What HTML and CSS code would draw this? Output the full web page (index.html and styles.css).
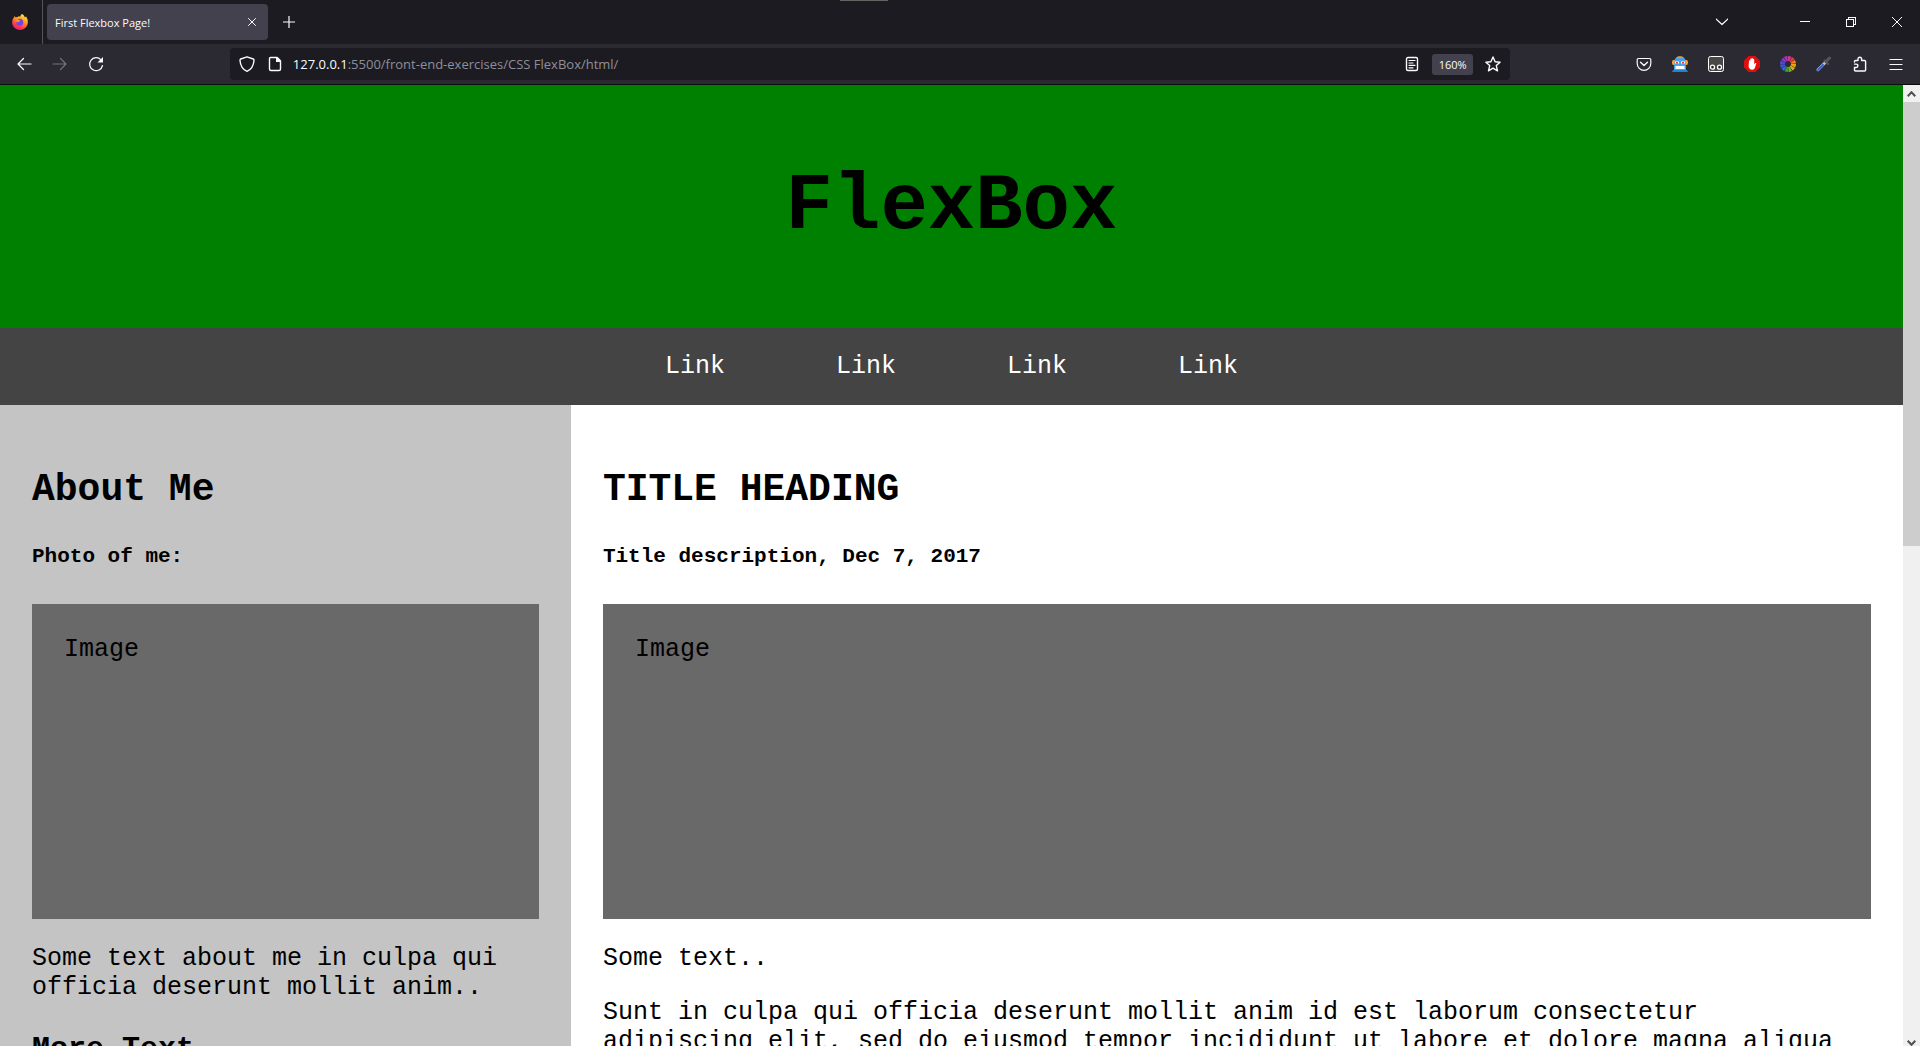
FILE: index.html
```html
<!DOCTYPE html>
<html lang="en">
<head>
<meta charset="utf-8">
<title>First Flexbox Page!</title>
<link rel="stylesheet" href="styles.css">
</head>
<body>
<div class="window-grip"></div>
<header class="tabbar">
  <div class="brand">
    <svg width="16" height="16" viewBox="0 0 16 16"><defs><linearGradient id="fx" x1="0.8" y1="0" x2="0.3" y2="1"><stop offset="0" stop-color="#fff04a"/><stop offset=".4" stop-color="#ff9a1f"/><stop offset=".75" stop-color="#ff3b47"/><stop offset="1" stop-color="#e31587"/></linearGradient></defs><path fill="url(#fx)" d="M10 0c2 1 2.6 2.4 2.7 3.4L14 2.6C15.500 4.500 16 6.500 15.800 9c-.5 4-3.800 7-7.800 7S.5 13 .2 9C0 6.800.8 4.500 2.200 3L2.500 2l1 1.200 2-.2 1.200-.8c.6-.1 1.300.1 1.600.6C8.300 1.800 9 .6 10 0z"/><circle cx="7.800" cy="8.300" r="3.500" fill="#7542e5"/><path d="M3.500 5.500c2-.8 4 .3 5 1.500-1.500 0-2 1.300-3.500 1.500z" fill="#ff9820"/></svg>
  </div>
  <div class="tab">
    <span>First Flexbox Page!</span>
    <button class="tab-close" aria-label="Close tab"><svg width="8" height="8" viewBox="0 0 8 8"><path class="line thin" d="M.5.5l7 7M7.500.5l-7 7"/></svg></button>
  </div>
  <button class="tool new-tab" aria-label="New tab"><svg width="12" height="12" viewBox="0 0 12 12"><path class="line" d="M6 0v12M0 6h12"/></svg></button>
  <button class="tool all-tabs" aria-label="List all tabs"><svg width="12" height="8" viewBox="0 0 12 8"><path class="line" d="M0 1l6 5.500L12 1"/></svg></button>
  <div class="window-buttons">
    <button class="win" aria-label="Minimize"><svg width="10" height="10" viewBox="0 0 10 10"><path class="crisp" d="M0 4.500h10"/></svg></button>
    <button class="win" aria-label="Restore"><svg width="10" height="10" viewBox="0 0 10 10"><path class="crisp" d="M.5 2.500h7v7h-7zM2.500 2.500v-2h7v7h-2"/></svg></button>
    <button class="win" aria-label="Close"><svg width="10" height="10" viewBox="0 0 10 10"><path class="line thin" d="M0 0l10 10M10 0L0 10"/></svg></button>
  </div>
</header>
<div class="toolbar">
  <button class="tool" aria-label="Back"><svg width="16" height="16" viewBox="0 0 16 16"><path class="line" d="M15 8H2M7.500 2.500L2 8l5.500 5.500"/></svg></button>
  <button class="tool dim" aria-label="Forward"><svg width="16" height="16" viewBox="0 0 16 16"><path class="line" d="M1 8h13M8.500 2.500L14 8l-5.500 5.500"/></svg></button>
  <button class="tool" aria-label="Reload"><svg width="16" height="16" viewBox="0 0 16 16"><path class="line" d="M14.500 9.500A6.500 6.500 0 1 1 13 3.800"/><path fill="currentColor" d="M15 1v5.500H9.500z"/></svg></button>
  <span class="spring"></span>
  <div class="urlbar">
    <button class="mini" aria-label="Tracking protection"><svg width="16" height="16" viewBox="0 0 16 16"><path class="line thick" d="M8 .8l6.300 2.200c.7.300.8.700.7 1.500C14.600 9.500 12.500 13.500 8 15.300 3.500 13.500 1.400 9.500 1 4.500c0-.8 0-1.200.7-1.500z"/></svg></button>
    <button class="mini" aria-label="Site information"><svg width="16" height="16" viewBox="0 0 16 16"><path class="line thick" d="M3.500 1.500H10L13.500 5v8c0 1-.5 1.500-1.500 1.500H4c-1 0-1.500-.5-1.500-1.500V2.500c0-.6.400-1 1-1z"/><path fill="currentColor" d="M9 1h1.500L14 4.500V6H9z"/></svg></button>
    <label class="host" for="url">127.0.0.1</label>
    <input class="url" id="url" type="text" value=":5500/front-end-exercises/CSS FlexBox/html/">
    <button class="mini" aria-label="Reader view"><svg width="16" height="16" viewBox="0 0 16 16"><rect class="line thick" x="2.500" y="1.500" width="11" height="13" rx="1.500"/><path class="line" d="M5 4.500h6M5 7h4M5 9.300h6M5 11.800h4"/></svg></button>
    <button class="zoom">160%</button>
    <button class="mini" aria-label="Bookmark"><svg width="16" height="16" viewBox="0 0 16 16"><path class="line thick" d="M8 1l2.100 4.700 5 .5-3.800 3.400 1.200 5.200L8 12.200l-4.500 2.600 1.200-5.200L.9 6.200l5-.5z"/></svg></button>
  </div>
  <span class="spring"></span>
  <button class="tool" aria-label="Pocket"><svg width="16" height="16" viewBox="0 0 16 16"><path class="line" d="M2.500 2.500h11c.8 0 1.300.5 1.300 1.300V7.500a6.800 6.800 0 0 1-13.600 0V3.800c0-.8.500-1.300 1.300-1.300z"/><path class="line thick" d="M4.500 6.200L8 9.500l3.500-3.300"/></svg></button>
  <button class="tool" aria-label="Robot extension"><svg width="16" height="16" viewBox="0 0 16 16"><path fill="#f6a336" d="M4 2c1-2.500 7-2.500 8 0zM1 4h14c1.300 1 1.300 4 0 5H1C-.3 8-.3 5 1 4z"/><path fill="#4aa3e8" d="M3 2.500c3-1.500 7-1.500 10 0l1 8V14H2v-3.500z"/><path fill="#2481c5" d="M1 14h14l1 2H0z"/><path fill="#fff" d="M3 5.500h4v2H3zM9 5.500h4v2H9zM3.500 10h9v3h-9z"/><path fill="#e33" d="M4 6h2v1.500H4zM10 6h2v1.500h-2z"/></svg></button>
  <button class="tool" aria-label="Tampermonkey"><svg width="16" height="16" viewBox="0 0 16 16"><rect x=".5" y=".5" width="15" height="15" rx="2" fill="#484848" stroke="#fff"/><circle cx="4.500" cy="11.200" r="2" fill="#222" stroke="#fff" stroke-width="1.300"/><circle cx="11.500" cy="11.200" r="2" fill="#222" stroke="#fff" stroke-width="1.300"/></svg></button>
  <button class="tool" aria-label="Ad blocker"><svg width="16" height="16" viewBox="0 0 16 16"><path fill="#e40d0d" d="M4.700 0h6.600L16 4.700v6.600L11.300 16H4.700L0 11.300V4.700z"/><path fill="#fff" d="M5 5c0-1 1.200-1 1.300 0V3.300c0-1 1.300-1 1.300 0V2.600c0-.9 1.300-.9 1.300 0v.9c.1-.9 1.300-.9 1.300.1v5l.8-1.300c.5-.6 1.400-.2 1.200.5L10.800 12c-.5 1.200-1.300 1.700-2.500 1.700C6 13.700 4.600 12 4.600 10z"/></svg></button>
  <button class="tool" aria-label="Colour wheel"><svg width="16" height="16" viewBox="0 0 16 16" fill="none" stroke-width="5"><g stroke-dasharray="2.500 50"><circle cx="8" cy="8" r="5.500" stroke="#f2a20c"/><circle cx="8" cy="8" r="5.500" stroke="#d9b310" transform="rotate(30 8 8)"/><circle cx="8" cy="8" r="5.500" stroke="#6fb51f" transform="rotate(60 8 8)"/><circle cx="8" cy="8" r="5.500" stroke="#2fa33b" transform="rotate(90 8 8)"/><circle cx="8" cy="8" r="5.500" stroke="#3468d8" transform="rotate(120 8 8)"/><circle cx="8" cy="8" r="5.500" stroke="#3d52df" transform="rotate(150 8 8)"/><circle cx="8" cy="8" r="5.500" stroke="#5d42d4" transform="rotate(180 8 8)"/><circle cx="8" cy="8" r="5.500" stroke="#7e3bd0" transform="rotate(210 8 8)"/><circle cx="8" cy="8" r="5.500" stroke="#a633bd" transform="rotate(240 8 8)"/><circle cx="8" cy="8" r="5.500" stroke="#d1358c" transform="rotate(270 8 8)"/><circle cx="8" cy="8" r="5.500" stroke="#e33b42" transform="rotate(300 8 8)"/><circle cx="8" cy="8" r="5.500" stroke="#f0811f" transform="rotate(330 8 8)"/></g></svg></button>
  <button class="tool" aria-label="Colour picker"><svg width="16" height="16" viewBox="0 0 16 16" stroke-linecap="round"><path stroke="#aab8d8" stroke-width="3" d="M2 13.700l6.500-6.500"/><path stroke="#3159d0" stroke-width="1.800" d="M2 13.800l5-5"/><path stroke="#565656" stroke-width="3" d="M10.500 5l3-3"/><path stroke="#565656" stroke-width="2" d="M8.500 4.500l3.500 3.500"/></svg></button>
  <button class="tool" aria-label="Extensions"><svg width="16" height="16" viewBox="0 0 16 16"><path class="line thick" d="M2.500 6V5.500c0-.6.400-1 1-1H6V3a1.800 1.800 0 0 1 3.600 0v1.500h3c.6 0 1 .4 1 1v8.500c0 .6-.4 1-1 1H3.500c-.6 0-1-.4-1-1v-2.500h1.700a1.700 1.700 0 0 0 0-3.400H2.500"/></svg></button>
  <button class="tool" aria-label="Menu"><svg width="16" height="16" viewBox="0 0 16 16"><path class="line" d="M2 3.500h12M2 8.500h12M2 13.500h12"/></svg></button>
</div>
<div class="viewport">
  <div class="page">
    <div class="hero"><h1>FlexBox</h1></div>
    <nav class="links">
      <a href="#">Link</a><a href="#">Link</a><a href="#">Link</a><a href="#">Link</a>
    </nav>
    <div class="columns">
      <aside class="side">
        <h2>About Me</h2>
        <h5>Photo of me:</h5>
        <div class="image">Image</div>
        <p>Some text about me in culpa qui officia deserunt mollit anim..</p>
        <h3>More Text</h3>
      </aside>
      <main class="main">
        <h2>TITLE HEADING</h2>
        <h5>Title description, Dec 7, 2017</h5>
        <div class="image">Image</div>
        <p>Some text..</p>
        <p>Sunt in culpa qui officia deserunt mollit anim id est laborum consectetur adipiscing elit, sed do eiusmod tempor incididunt ut labore et dolore magna aliqua</p>
      </main>
    </div>
  </div>
  <div class="scrollbar">
    <div class="arrow"><svg width="9" height="6" viewBox="0 0 9 6"><path d="M.7 5.200l3.800-4 3.800 4"/></svg></div>
    <div class="track"><div class="thumb"></div></div>
    <div class="arrow"><svg width="9" height="6" viewBox="0 0 9 6"><path d="M.7.8l3.800 4 3.800-4"/></svg></div>
  </div>
</div>
</body>
</html>
```
FILE: styles.css
```css
* { box-sizing: border-box; }

body {
  margin: 0;
  height: 100vh;
  display: flex;
  flex-direction: column;
  overflow: hidden;
  background: #1c1b22;
  color: #fbfbfe;
  font-family: "Open Sans", "Noto Sans", sans-serif;
  font-size: 13px;
}

button {
  display: flex;
  align-items: center;
  justify-content: center;
  flex: none;
  margin: 0;
  padding: 0;
  border: 0;
  background: none;
  color: inherit;
  font: inherit;
}

svg { display: block; }
.line { fill: none; stroke: currentColor; stroke-width: 1.2; stroke-linecap: round; stroke-linejoin: round; }
.thick { stroke-width: 1.4; }
.thin { stroke-width: 1; }
.crisp { fill: none; stroke: currentColor; shape-rendering: crispEdges; }

/* Browser chrome */
.window-grip {
  position: absolute;
  top: 0;
  left: 50%;
  width: 48px;
  height: 1px;
  margin-left: -120px;
  background: #66645f;
}

.tabbar { display: flex; align-items: center; flex: none; height: 44px; }
.brand {
  display: flex;
  align-items: center;
  justify-content: center;
  width: 43px;
  height: 44px;
  padding-right: 2px;
  border-right: 1px solid #54535a;
}
.tab {
  display: flex;
  align-items: center;
  justify-content: space-between;
  width: 221px;
  height: 36px;
  margin-left: 4px;
  padding: 0 4px 0 8px;
  border-radius: 4px;
  background: #42414d;
  font-size: 11px;
}
.tab-close { width: 24px; height: 24px; }
.tool { width: 36px; height: 32px; }
.new-tab { margin-left: 3px; }
.all-tabs { margin-left: auto; margin-right: 42px; }
.window-buttons { display: flex; }
.win { width: 46px; height: 32px; }

.toolbar {
  display: flex;
  align-items: center;
  flex: none;
  height: 41px;
  padding: 0 6px;
  border-bottom: 1px solid #0c0c0d;
  background: #2b2a33;
}
.dim { color: #73727a; }
.spring { flex: 1; }
.urlbar {
  display: flex;
  align-items: center;
  flex: 11;
  height: 32px;
  padding: 0 3px;
  border-radius: 4px;
  background: #1c1b22;
}
.mini { width: 28px; height: 28px; }
.host { margin-left: 4px; }
.url {
  flex: 1;
  min-width: 0;
  padding: 0;
  border: 0;
  outline: 0;
  background: none;
  color: #8f8f9a;
  font: inherit;
}
.zoom {
  width: 41px;
  height: 21px;
  margin: 0 6px;
  border-radius: 3px;
  background: #42414d;
  font-size: 11px;
}

/* Page */
.viewport { display: flex; flex: 1; min-height: 0; overflow: hidden; }
.page {
  flex: 1;
  min-width: 0;
  overflow: hidden;
  background: #fff;
  color: #000;
  font-family: "Courier New", "Liberation Mono", monospace;
  font-size: 25px;
  line-height: 29px;
}
.hero { padding: 78px 32px 76px; background: #008000; text-align: center; }
h1 { margin: 0; font-size: 79px; line-height: 89px; }
.links {
  display: flex;
  justify-content: center;
  gap: 111px;
  padding: 24px 32px;
  background: #444;
}
.links a { color: #fff; text-decoration: none; }
.columns { display: flex; }
.side { flex: 0 0 30%; padding: 32px; background: #c4c4c4; }
.main { flex: 0 0 70%; padding: 32px; }
.main p { padding-right: 16px; }
h2 { margin: 31px 0 34px; font-size: 38px; line-height: 43px; }
h5 { margin: 0 0 35px; font-size: 21px; line-height: 24px; }
h3 { margin: 30px 0; font-size: 30px; line-height: 34px; }
.image { height: 315px; padding: 31px 32px; background: #696969; }
p { margin: 25px 0; }

.scrollbar {
  display: flex;
  flex-direction: column;
  flex: none;
  width: 17px;
  margin-bottom: -5px;
  background: #f0f0f0;
}
.arrow { display: flex; align-items: center; justify-content: center; flex: none; height: 17px; }
.arrow path { fill: none; stroke: #505050; stroke-width: 2; }
.track { flex: 1; }
.thumb { height: 47.6%; background: #cdcdcd; }
```
